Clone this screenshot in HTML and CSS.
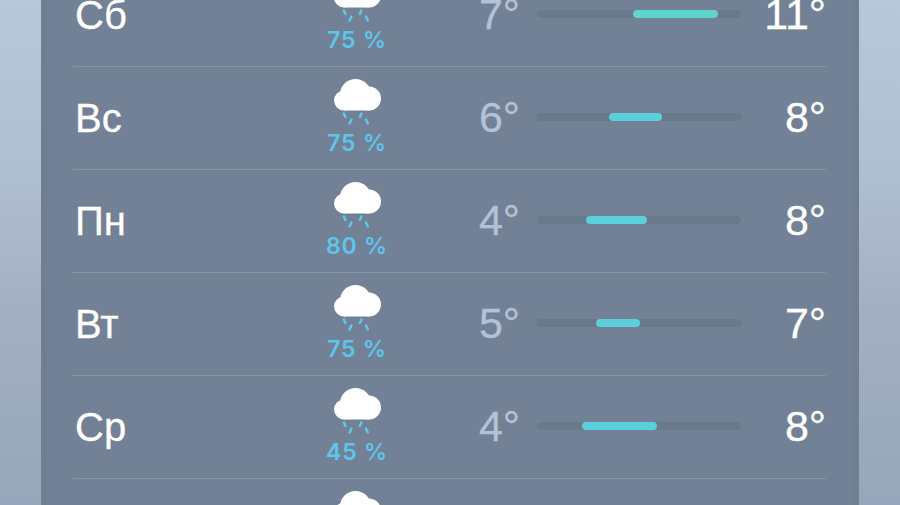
FILE: index.html
```html
<!DOCTYPE html>
<html lang="ru">
<head>
    <meta charset="UTF-8">
    <meta name="viewport" content="width=device-width, initial-scale=1.0">
    <title>Погода</title>
    <link rel="stylesheet" href="styles.css">
</head>
<body>
    <svg class="icon-defs" width="0" height="0" aria-hidden="true">
        <symbol id="rain-cloud" viewBox="0 0 47 46">
            <g fill="#fff">
                <circle cx="21.5" cy="15.5" r="15.5"/>
                <circle cx="35" cy="19.5" r="12"/>
                <circle cx="10" cy="21.5" r="10"/>
                <rect x="10" y="20" width="25" height="11.5"/>
            </g>
            <g stroke="#63c8ec" stroke-width="2.4" stroke-linecap="round">
                <path d="M9.8 34.5l1.6 3.5"/>
                <path d="M17.4 40.5l-1.8 4"/>
                <path d="M27.4 34.5l-1.6 3.5"/>
                <path d="M32 40.5l1.8 4"/>
            </g>
        </symbol>
    </svg>

    <div class="forecast">
        <div class="day-row">
            <span class="day-name">Сб</span>
            <div class="day-icon">
                <svg class="cloud"><use href="#rain-cloud"/></svg>
                <span class="chance">75 %</span>
            </div>
            <span class="temp-low">7°</span>
            <div class="range"><div class="range-fill range-fill-warm" style="margin-left: 96px; width: 85px"></div></div>
            <span class="temp-high">11°</span>
        </div>
        <div class="day-row">
            <span class="day-name">Вс</span>
            <div class="day-icon">
                <svg class="cloud"><use href="#rain-cloud"/></svg>
                <span class="chance">75 %</span>
            </div>
            <span class="temp-low">6°</span>
            <div class="range"><div class="range-fill" style="margin-left: 72px; width: 53px"></div></div>
            <span class="temp-high">8°</span>
        </div>
        <div class="day-row">
            <span class="day-name">Пн</span>
            <div class="day-icon">
                <svg class="cloud"><use href="#rain-cloud"/></svg>
                <span class="chance">80 %</span>
            </div>
            <span class="temp-low">4°</span>
            <div class="range"><div class="range-fill" style="margin-left: 49px; width: 61px"></div></div>
            <span class="temp-high">8°</span>
        </div>
        <div class="day-row">
            <span class="day-name">Вт</span>
            <div class="day-icon">
                <svg class="cloud"><use href="#rain-cloud"/></svg>
                <span class="chance">75 %</span>
            </div>
            <span class="temp-low">5°</span>
            <div class="range"><div class="range-fill" style="margin-left: 59px; width: 44px"></div></div>
            <span class="temp-high">7°</span>
        </div>
        <div class="day-row">
            <span class="day-name">Ср</span>
            <div class="day-icon">
                <svg class="cloud"><use href="#rain-cloud"/></svg>
                <span class="chance">45 %</span>
            </div>
            <span class="temp-low">4°</span>
            <div class="range"><div class="range-fill" style="margin-left: 45px; width: 75px"></div></div>
            <span class="temp-high">8°</span>
        </div>
        <div class="day-row">
            <span class="day-name"></span>
            <div class="day-icon">
                <svg class="cloud"><use href="#rain-cloud"/></svg>
            </div>
        </div>
    </div>
</body>
</html>
```

FILE: styles.css
```css
html, body {
    height: 100%;
}

body {
    margin: 0;
    overflow: hidden;
    font-family: 'Liberation Sans', Arial, sans-serif;
    background: linear-gradient(180deg, #b9c8d8 0%, #b0bfcf 35%, #a2b0c1 60%, #98a6bb 100%);
    color: #fff;
}

.icon-defs {
    display: block;
    height: 0;
}

.forecast {
    width: 753px;
    height: 560px;
    margin: -36px 41px 0;
    padding: 0 33px 0 32px;
    background-color: #728195;
    box-shadow: inset 6px 0 0 #6f7f90, inset -6px 0 0 #6f7f90;
}

.day-row {
    display: grid;
    grid-template-columns: 209px 150px 88px 204px 1fr;
    align-items: start;
    height: 102px;
    border-bottom: 1px solid #8695a6;
}

.day-name,
.temp-low,
.temp-high {
    margin-top: 28px;
    font-size: 40px;
    line-height: 46px;
    -webkit-text-stroke: 0.3px currentColor;
}

.day-name {
    padding-left: 2px;
}

.day-icon {
    display: flex;
    flex-direction: column;
    align-items: center;
    padding-top: 12px;
}

.cloud {
    display: block;
    width: 47px;
    height: 46px;
}

.chance {
    margin-top: 4px;
    font-family: Inter, 'Liberation Sans', sans-serif;
    font-size: 23px;
    line-height: 28px;
    font-weight: 600;
    letter-spacing: 0.8px;
    color: #5cc6ee;
}

.temp-low,
.temp-high {
    margin-top: 27px;
    font-size: 43px;
    text-align: right;
}

.temp-low {
    color: #b4c2d8;
}

.range {
    height: 8px;
    margin: 46px 0 0 17px;
    width: 204px;
    border-radius: 4px;
    background-color: #6a7989;
}

.range-fill {
    height: 8px;
    border-radius: 4px;
    background-color: #5ccfdc;
}

.range-fill-warm {
    background-color: #5ed4cc;
}
```
